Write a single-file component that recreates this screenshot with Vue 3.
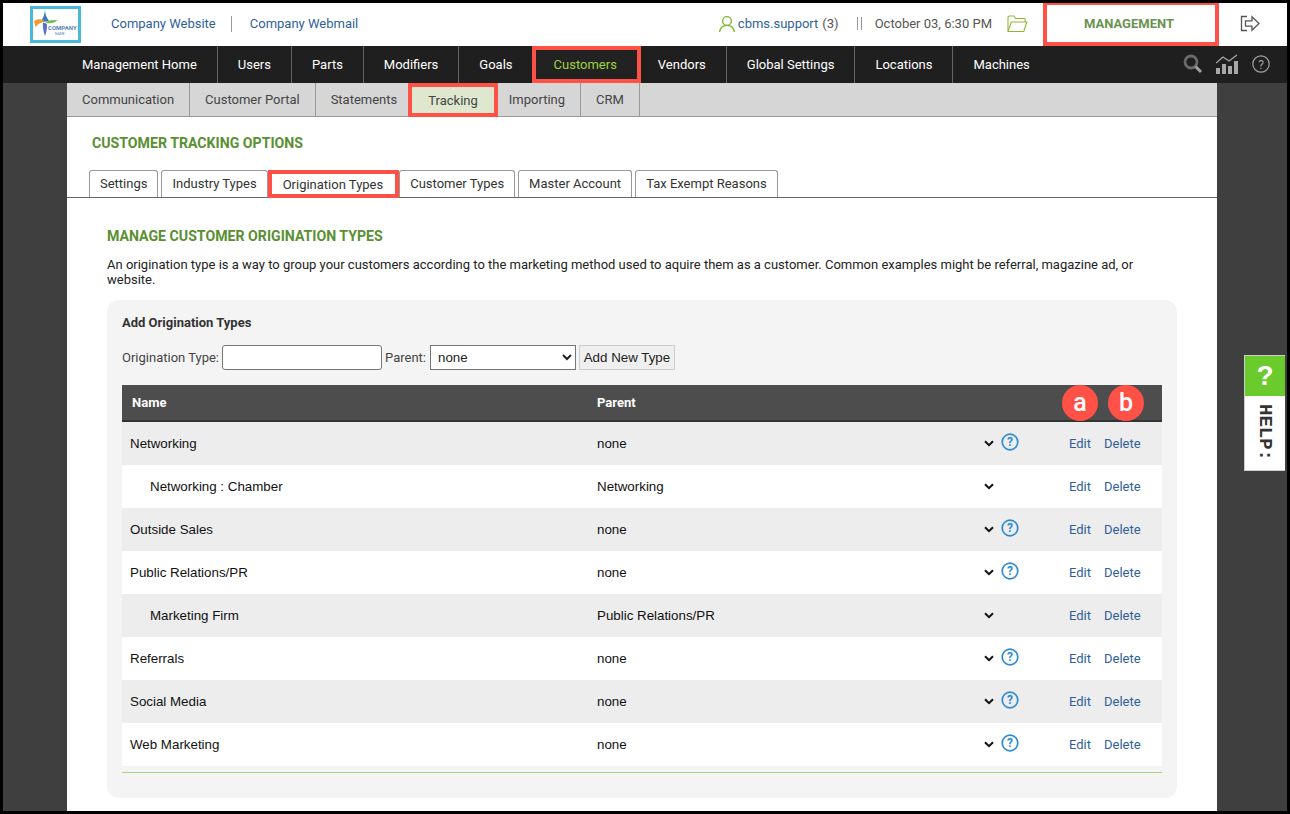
<script setup>
const nav = ['Management Home','Users','Parts','Modifiers','Goals','Customers','Vendors','Global Settings','Locations','Machines']
const sub = ['Communication','Customer Portal','Statements','Tracking','Importing','CRM']
const tabs = ['Settings','Industry Types','Origination Types','Customer Types','Master Account','Tax Exempt Reasons']
const rows = [
  { name:'Networking', parent:'none', help:true },
  { name:'Networking : Chamber', parent:'Networking', child:true },
  { name:'Outside Sales', parent:'none', help:true },
  { name:'Public Relations/PR', parent:'none', help:true },
  { name:'Marketing Firm', parent:'Public Relations/PR', child:true },
  { name:'Referrals', parent:'none', help:true },
  { name:'Social Media', parent:'none', help:true },
  { name:'Web Marketing', parent:'none', help:true },
]
</script>

<template>
  <div class="frame">
    <header class="top">
      <div class="logo">
        <svg width="24" height="26" viewBox="0 0 24 26">
          <path d="M11 0 C11.500 5 12.500 8 15 10.500 C12.500 12 9.500 12 7 11 C9.500 8 10.500 4 11 0Z" fill="#3a78c4" />
          <path d="M0 11 C4 8.500 8 9 11 11.500 C7 12.500 3.500 14 1.500 17Z" fill="#f39a2e" />
          <path d="M11.500 12.500 C15 9.500 20 9.500 24 10.500 C20 12.500 16 14.500 11.500 12.500Z" fill="#6cc04a" />
          <path d="M9 12.500 C12 13 13 14 13 15 C13 19 12.500 22 11 26 C9.500 22 8.500 17 9 12.500Z" fill="#5a6fc8" />
        </svg>
        <span class="logo-t">COMPANY</span>
        <span class="logo-s">NAME</span>
      </div>
      <a class="toplink l1">Company Website</a>
      <span class="topsep"></span>
      <a class="toplink">Company Webmail</a>
      <div class="spacer"></div>
      <svg class="user" width="18" height="18" viewBox="0 0 18 18" fill="none" stroke="#7cb82f" stroke-width="1.400"><circle cx="9" cy="6" r="4.400"/><path d="M1.500 17c.8-4.500 3.600-6.600 7.500-6.600s6.700 2.100 7.500 6.600"/></svg>
      <a class="toplink uname">cbms.support</a>
      <span class="count">(3)</span>
      <span class="bars"></span>
      <span class="date">October 03, 6:30 PM</span>
      <svg class="folder" width="21" height="18" viewBox="0 0 21 18" fill="none" stroke="#8fb83a" stroke-width="1.100"><path d="M1 16V2.500C1 1.700 1.500 1 2.300 1H7l1.500 2.500h8.700c.6 0 1 .5 1 1V7"/><path d="M1 16.500 4.300 7h15.500l-3 9.500z"/></svg>
      <div class="mgmt">MANAGEMENT</div>
      <svg class="logout" width="20" height="17" viewBox="0 0 20 17" fill="none" stroke="#555" stroke-width="1.300"><path d="M7 1.500H1.500v14H7"/><path d="M5.500 5.800h6.500V1.800l7 6.700-7 6.700v-4h-6.500z"/></svg>
    </header>

    <nav class="nav">
      <a v-for="n in nav" :key="n" class="nav-i" :class="{ on: n==='Customers' }">{{ n }}</a>
      <div class="spacer"></div>
      <svg class="ni" width="20" height="20" viewBox="0 0 20 20" fill="none"><circle cx="8" cy="8" r="6" stroke="#6a6a6a" stroke-width="2.800"/><path d="M12.500 12.500 18 18" stroke="#a0a0a0" stroke-width="3"/></svg>
      <svg class="ni chart" width="22" height="20" viewBox="0 0 22 20" fill="#a8a8a8"><rect x="0" y="14" width="4" height="6"/><rect x="6" y="10" width="4" height="10"/><rect x="12" y="12" width="4" height="8"/><rect x="18" y="7" width="4" height="13"/><path d="M0 9 7 3 13 7 21 1" fill="none" stroke="#a8a8a8" stroke-width="1.300"/></svg>
      <svg class="ni last" width="18" height="18" viewBox="0 0 18 18" fill="none" stroke="#a0a0a0" stroke-width="1.200"><circle cx="9" cy="9" r="8.200"/><text x="9" y="13.500" text-anchor="middle" font-size="12" font-family="Roboto" fill="#a0a0a0" stroke="none">?</text></svg>
    </nav>

    <div class="body">
      <main class="page">
        <div class="subnav">
          <a v-for="s in sub" :key="s" class="sub-i" :class="{ on: s==='Tracking' }">{{ s }}</a>
        </div>
        <h1 class="h1">CUSTOMER TRACKING OPTIONS</h1>
        <div class="tabs">
          <a v-for="t in tabs" :key="t" class="tab" :class="{ on: t==='Origination Types' }">{{ t }}</a>
        </div>
        <section class="sec">
          <h2 class="h2">MANAGE CUSTOMER ORIGINATION TYPES</h2>
          <p class="desc">An origination type is a way to group your customers according to the marketing method used to aquire them as a customer. Common examples might be referral, magazine ad, or website.</p>
          <div class="panel">
            <div class="add">Add Origination Types</div>
            <div class="form">
              <label>Origination Type:</label>
              <input class="inp" type="text" />
              <label class="plab">Parent:</label>
              <select class="sel"><option>none</option></select>
              <button class="btn">Add New Type</button>
            </div>
            <div class="table">
              <div class="thead">
                <span>Name</span><span>Parent</span>
                <span class="dot a">a</span><span class="dot b">b</span>
              </div>
              <div v-for="r in rows" :key="r.name" class="row">
                <span class="nm" :class="{ child: r.child }">{{ r.name }}</span>
                <span>{{ r.parent }}</span>
                <svg class="chev" width="10" height="7" viewBox="0 0 10 7" fill="none" stroke="#111" stroke-width="2"><path d="M1 1.200 5 5.200 9 1.200"/></svg>
                <svg v-if="r.help" class="q" width="18" height="18" viewBox="0 0 18 18" fill="none" stroke="#2f8ad4" stroke-width="1.700"><circle cx="9" cy="9" r="7.800"/><text x="9" y="13.200" text-anchor="middle" font-size="12" font-weight="700" font-family="Roboto" fill="#2f8ad4" stroke="none">?</text></svg>
                <span v-else class="q"></span>
                <a class="act ed">Edit</a>
                <a class="act">Delete</a>
              </div>
            </div>
            <div class="rule"></div>
          </div>
        </section>
      </main>
      <aside class="help">
        <div class="help-q">?</div>
        <div class="help-t">HELP:</div>
      </aside>
    </div>
  </div>
</template>

<style>
html, body { margin: 0; background: #000; }
</style>

<style scoped>
.frame {
  box-sizing: border-box; width: 1290px; height: 814px; border: 3px solid #000;
  overflow: hidden; display: flex; flex-direction: column;
  font-family: Roboto, "Liberation Sans", sans-serif; font-size: 13px; color: #222; background: #3f3f3f;
}
.top { height: 43px; box-sizing: border-box; padding-bottom: 2px; flex: none; background: #fff; display: flex; align-items: center; }
.spacer { flex: 1; }
.logo {
  box-sizing: border-box; width: 51px; height: 37px; margin-left: 27px; margin-top: 2px; border: 3px solid #4ab8d8;
  position: relative; background: #fff; flex: none;
}
.logo svg { position: absolute; left: 1px; top: 1px; }
.logo-t { position: absolute; left: 15px; top: 16px; font-size: 6px; line-height: 6px; font-weight: 700; color: #5a7fb5; }
.logo-s { position: absolute; left: 22px; top: 23px; font-size: 3.500px; line-height: 4px; color: #5a7fb5; }
.toplink { color: #2f5f9a; font-size: 13px; }
.l1 { margin-left: 30px; }
.topsep { width: 1px; height: 16px; background: #999; margin: 0 18px 0 15px; }
.user { margin-right: 2px; }
.count { color: #555; margin-left: 4px; }
.bars { width: 3px; height: 13px; border: solid #999; border-width: 0 1px; margin-left: 18px; }
.date { color: #555; margin-left: 13px; }
.folder { margin-left: 15px; }
.mgmt {
  box-sizing: border-box; width: 176px; height: 43px; margin-left: 15px; margin-bottom: -2px; border: 4px solid #ff5146;
  border-top-width: 2px; display: flex; align-items: center; justify-content: center;
  font-weight: 700; font-size: 13px; color: #6a934f; padding-right: 4px;
}
.logout { margin-left: 21px; margin-right: 27px; }
.nav { height: 37px; box-sizing: border-box; flex: none; background: #1f1f1f; display: flex; align-items: stretch; padding-left: 59px; }
.nav-i {
  box-sizing: border-box; padding: 0 20px; color: #fff; display: flex; align-items: center; font-size: 13px;
  border-right: 1px solid #666;
}
.nav-i:nth-child(10) { border-right: none; }
.nav-i.on { color: #9fd43c; border: 4px solid #ff5146; padding: 0 20px 0 18px; background: #222; margin: 0 -3px 0 -2px; position: relative; }
.ni { align-self: center; margin-left: 12px; margin-bottom: 2px; flex: none; }
.chart { margin-left: 13px; }
.ni.last { margin-left: 14px; margin-right: 17px; }
.body { flex: 1; display: flex; min-height: 0; position: relative; padding-left: 64px; }
.page { width: 1150px; background: #fff; flex: none; }
.subnav { height: 34px; box-sizing: border-box; background: #d6d6d6; border-bottom: 1px solid #999; display: flex; }
.sub-i { box-sizing: border-box; height: 33px; padding: 0 15px; display: flex; align-items: center; color: #444; border-right: 1px solid #999; }
.sub-i.on { height: 34px; background: #dfe8cf; border: 4px solid #ff5146; padding: 0 16px; margin: 0 -4px 0 -5px; position: relative; z-index: 1; }
.h1 { margin: 17px 0 0 25px; font-size: 14.150px; line-height: 18px; font-weight: 700; color: #5a8f32; }
.tabs { display: flex; height: 28px; box-sizing: border-box; margin-top: 18px; padding-left: 22px; border-bottom: 1px solid #666; gap: 3px; }
.tab {
  box-sizing: border-box; height: 27px; padding: 0 10px 2px; border: 1px solid #999; border-bottom: none; border-radius: 3px 3px 0 0;
  display: flex; align-items: center; color: #333;
}
.tab.on { height: 28px; border: 4px solid #ff5146; border-radius: 0; padding: 0 12px 0 11px; margin: 0 -3px 0 -3px; background: #fff; position: relative; z-index: 1; }
.sec { padding: 0 40px; }
.h2 { margin: 29px 0 0; font-size: 14.150px; line-height: 18px; font-weight: 700; color: #5a8f32; }
.desc { margin: 12px 0 0; font-size: 13px; line-height: 15px; color: #222; }
.panel { box-sizing: border-box; margin-top: 13px; height: 498px; background: #f4f4f4; border-radius: 12px; padding: 15px; }
.add { font-weight: 700; font-size: 13px; line-height: 16px; color: #333; }
.form { display: flex; align-items: center; gap: 3px; margin-top: 14px; height: 25px; color: #444; font-size: 13px; }
.plab { margin-right: 1px; }
.inp { box-sizing: border-box; width: 160px; height: 25px; border: 1px solid #767676; border-radius: 3px; background: #fff; padding: 0; outline: none; }
.sel { box-sizing: border-box; width: 146px; height: 25px; border: 1px solid #767676; background: #fff; font: 13.330px "Liberation Sans", sans-serif; padding-left: 3px; color: #222; }
.btn { box-sizing: border-box; height: 25px; width: 96px; background: #efefef; border: 1px solid #ccc; font: 13.330px "Liberation Sans", sans-serif; color: #222; padding: 0; }
.table { margin-top: 15px; }
.thead {
  box-sizing: border-box; height: 37px; background: #4d4d4d; border-bottom: 2px solid #333; display: grid; grid-template-columns: 465px 1fr;
  align-items: center; padding-left: 10px; color: #fff; font-weight: 700; font-size: 13px; position: relative;
}
.dot {
  position: absolute; top: 0; width: 36px; height: 36px; border-radius: 50%; background: #ff5146; color: #fff; display: flex;
  align-items: center; justify-content: center; font: 500 25px/36px Roboto, sans-serif;
}
.dot.a { left: 940px; }
.dot.b { left: 986px; }
.row { height: 43px; display: flex; align-items: center; padding-left: 8px; background: #fff; font: 13.330px "Liberation Sans", sans-serif; color: #111; }
.row:nth-child(even) { background: #ededed; }
.row > span:first-child { width: 467px; flex: none; }
.row > span:nth-child(2) { width: 388px; flex: none; }
.child { box-sizing: border-box; padding-left: 20px; }
.chev { flex: none; margin-left: -1px; }
.q { flex: none; width: 18px; height: 18px; margin-left: 7px; margin-top: -3px; }
.act { color: #2f5f9a; font: 13px Roboto, sans-serif; }
.ed { margin-left: 50px; margin-right: 13px; }
.rule { height: 1px; background: #a9d47e; margin-top: 6px; }
.help {
  position: absolute; left: 1241px; top: 272px; width: 41px; height: 116px; box-sizing: border-box; background: #fff;
  border: 1px solid #ccc; border-right: none;
}
.help-q { height: 40px; background: #6ccb2c; color: #fff; font: 700 28px/40px "Liberation Sans", sans-serif; text-align: center; }
.help-t { writing-mode: vertical-rl; font: 700 19px/39px "Liberation Mono", monospace; color: #333; padding-top: 8px; height: 66px; box-sizing: border-box; white-space: nowrap; }
</style>
